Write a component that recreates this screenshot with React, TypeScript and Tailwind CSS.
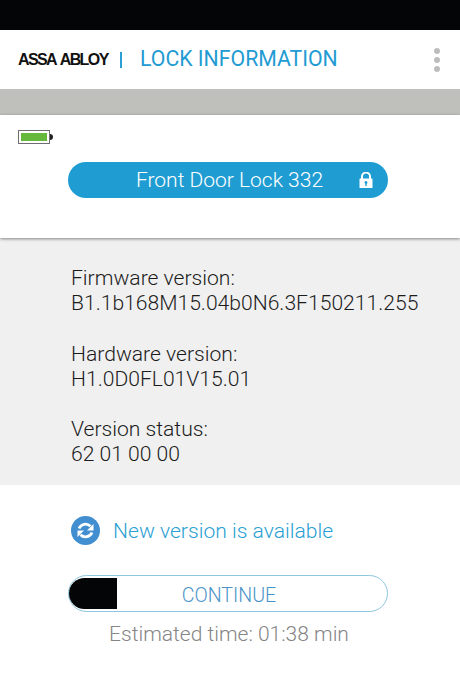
const roboto = { fontFamily: "Roboto, sans-serif" };

const VersionRow = ({ label, value }: { label: string; value: string }) => (
  <div className="text-[21.1px] leading-[25px] text-[#1c1c1c] font-light">
    <p>{label}</p>
    <p>{value}</p>
  </div>
);

const LockIcon = () => (
  <svg width="14" height="17" viewBox="0 0 14 17">
    <path d="M3 7V4.6a4 4 0 0 1 8 0V7" fill="none" stroke="#fff" strokeWidth="2" />
    <path fillRule="evenodd" fill="#fff" d="M1 6.5h12a.5.5 0 0 1 .5.5v8.5a.5.5 0 0 1-.5.5H1a.5.5 0 0 1-.5-.5V7a.5.5 0 0 1 .5-.5zM7 9a1.5 1.5 0 0 0-.7 2.8V14h1.4v-2.2A1.5 1.5 0 0 0 7 9z" />
  </svg>
);

const RefreshIcon = () => (
  <svg width="29" height="29" viewBox="0 0 29 29">
    <circle cx="14.5" cy="14.5" r="14.5" fill="#418fd0" />
    <path d="M8 12.5a7 7 0 0 1 11.5-2.2" fill="none" stroke="#fff" strokeWidth="2.8" />
    <path d="M22.5 8v6.5h-6.5z" fill="#fff" />
    <path d="M21 16.5a7 7 0 0 1-11.5 2.2" fill="none" stroke="#fff" strokeWidth="2.8" />
    <path d="M6.5 21v-6.5h6.5z" fill="#fff" />
  </svg>
);

export default function App() {
  return (
    <div className="flex h-[690px] w-[460px] flex-col overflow-hidden bg-white" style={roboto}>
      <div className="h-[30px] bg-[#030507]" />

      <header className="flex h-[59px] items-center bg-white pl-[18px] pr-5">
        <span className="mt-px w-[92px] text-[16px] font-bold tracking-[-1.6px] text-[#111] [word-spacing:2px]" style={{ fontFamily: "Liberation Sans, sans-serif" }}>
          ASSA ABLOY
        </span>
        <span className="ml-[10px] h-4 w-[1.5px] bg-[#2a9fd6]" />
        <h1 className="mb-[2px] ml-[18.5px] text-[21.25px] font-normal text-[#229bd3]">LOCK INFORMATION</h1>
        <div className="ml-auto flex flex-col gap-[3px]">
          <span className="h-1.5 w-1.5 rounded-full bg-[#bdbdbd]" />
          <span className="h-1.5 w-1.5 rounded-full bg-[#bdbdbd]" />
          <span className="h-1.5 w-1.5 rounded-full bg-[#bdbdbd]" />
        </div>
      </header>

      <div className="h-[26px] bg-[#bfc0bb]" />

      <section className="z-10 h-[123px] bg-white pt-[15px] shadow-[0_1px_3px_rgba(0,0,0,0.45)]">
        <div className="ml-[18px] flex items-center">
          <div className="h-[14px] w-8 border border-[#6e6e6e] bg-white p-[2px]">
            <div className="h-full bg-[#66b83c]" />
          </div>
          <div className="h-[6px] w-[3px] rounded-r-sm bg-[#222]" />
        </div>
        <div className="relative ml-[68px] mt-[18px] flex h-[36px] w-[320px] items-center justify-center rounded-full bg-[#1f9dd2] pl-[3px] pt-[2px] text-[21px] font-light text-white">
          Front Door Lock 332
          <span className="absolute right-[15px] top-[10px]">
            <LockIcon />
          </span>
        </div>
      </section>

      <section className="flex h-[247px] flex-col gap-[25.5px] bg-[#f0f0f0] pl-[71px] pt-[27px]">
        <VersionRow label="Firmware version:" value="B1.1b168M15.04b0N6.3F150211.255" />
        <VersionRow label="Hardware version:" value="H1.0D0FL01V15.01" />
        <VersionRow label="Version status:" value="62 01 00 00" />
      </section>

      <section className="flex flex-1 flex-col bg-white">
        <div className="ml-[71px] mt-[30px] flex items-center gap-[13px]">
          <RefreshIcon />
          <span className="text-[21.1px] font-light text-[#2aa0d2]">New version is available</span>
        </div>
        <div className="relative ml-[68px] mt-[28px] flex h-[37px] w-[320px] items-center justify-center rounded-full border border-[#8cc6df] pl-[2px] pt-[6px] text-[19.6px] font-light text-[#4a94c9]">
          <div className="absolute left-0 top-[2px] h-[31px] w-[48px] rounded-l-full bg-[#030507]" />
          CONTINUE
        </div>
        <p className="ml-[69px] mt-[7px] w-[320px] text-center text-[21px] font-light text-[#858585]">
          Estimated time: 01:38 min
        </p>
      </section>
    </div>
  );
}
